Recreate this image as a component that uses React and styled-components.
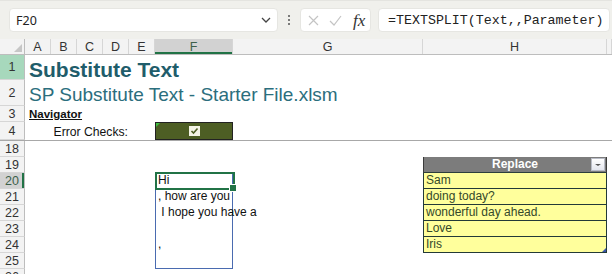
import React from 'react';
import styled, { createGlobalStyle, css } from 'styled-components';

const Global = createGlobalStyle`
  html, body { margin: 0; padding: 0; background: #fff; }
  body { width: 612px; height: 274px; overflow: hidden; font-family: "Liberation Sans", Arial, sans-serif; }
  * { box-sizing: border-box; }
`;

const COLS = '25px 26px 26px 26px 26px 26px 78px 190px 184px 1fr';

const Window = styled.div`
  width: 612px;
  height: 274px;
  overflow: hidden;
  display: flex;
  flex-direction: column;
  background: #fff;
`;

const FormulaBar = styled.div`
  height: 39px;
  flex: none;
  background: #f0f0ec;
  border-top: 1px solid #e4e4e0;
  display: flex;
  align-items: flex-start;
  padding: 7px 2px 0 9px;
`;

const NameBox = styled.div`
  width: 269px;
  height: 24px;
  background: #fff;
  border: 1px solid #e6e6e2;
  border-radius: 4px;
  display: flex;
  align-items: center;
  justify-content: space-between;
  padding: 0 6px 0 6px;
  font-family: "Noto Sans", "Open Sans", sans-serif;
  font-size: 12.5px;
  color: #222;
`;

const Dots = styled.div`
  width: 22px;
  height: 24px;
  display: flex;
  flex-direction: column;
  align-items: center;
  justify-content: center;
  gap: 2px;
  span { width: 2px; height: 2px; background: #555; border-radius: 1px; }
`;

const FxBox = styled.div`
  width: 71px;
  height: 24px;
  background: #fff;
  border: 1px solid #e6e6e2;
  border-radius: 4px;
  display: flex;
  align-items: center;
  padding: 0 0 0 7px;
  gap: 10px;
`;

const FxLabel = styled.span`
  font-family: "Liberation Serif", "Times New Roman", serif;
  font-style: italic;
  font-size: 17px;
  color: #333;
  margin-left: 1px;
  line-height: 1;
`;

const FormulaInput = styled.div`
  flex: 1;
  height: 24px;
  margin-left: 7px;
  background: #fff;
  border: 1px solid #e6e6e2;
  border-radius: 4px;
  display: flex;
  align-items: center;
  padding-left: 9px;
  font-family: "Liberation Mono", "DejaVu Sans Mono", monospace;
  font-size: 13.3px;
  color: #222;
  white-space: nowrap;
  overflow: hidden;
`;

const Row = styled.div`
  display: grid;
  grid-template-columns: ${COLS};
  height: ${p => p.$h}px;
  flex: none;
  ${p => p.$freeze && css`border-bottom: 1px solid #a8a8a8;`}
`;

const HeaderRow = styled(Row)`
  background: #f3f3f3;
  border-bottom: 1px solid #bdbdbd;
`;

const Corner = styled.div`
  position: relative;
  border-right: 1px solid #bdbdbd;
  &::after {
    content: '';
    position: absolute;
    right: 2px;
    bottom: 2px;
    border-left: 8px solid transparent;
    border-bottom: 8px solid #c6c6c6;
  }
`;

const ColHead = styled.div`
  display: flex;
  align-items: center;
  justify-content: center;
  font-size: 12.5px;
  color: #333;
  border-right: 1px solid #d6d6d6;
  ${p => p.$sel && css`
    background: #d2d2d2;
    color: #3c5f4a;
    box-shadow: inset 0 -2px 0 #217346;
  `}
`;

const RowHead = styled.div`
  display: flex;
  align-items: center;
  justify-content: center;
  font-size: 12.5px;
  color: #333;
  background: #f3f3f3;
  border-right: 1px solid #bdbdbd;
  border-bottom: 1px solid #d6d6d6;
  ${p => p.$hl && css`background: #a7d8bc;`}
  ${p => p.$sel && css`
    background: #d2d2d2;
    color: #3c5f4a;
    box-shadow: inset -2px 0 0 #217346;
  `}
`;

const Cell = styled.div`
  position: relative;
  grid-column: ${p => p.$col} / span ${p => p.$span || 1};
  display: flex;
  align-items: flex-end;
  justify-content: ${p => (p.$right ? 'flex-end' : 'flex-start')};
  padding: 0 ${p => (p.$right ? 1 : 0)}px ${p => p.$pb ?? 1}px ${p => p.$pl ?? 3}px;
  white-space: pre;
  font-size: 12px;
  line-height: 1.15;
  color: #111;
  overflow: visible;
`;

const Title = styled.span`
  font-size: 21px;
  font-weight: bold;
  line-height: 19px;
  color: #1f5d6b;
`;

const Subtitle = styled.span`
  font-size: 19px;
  line-height: 1.15;
  color: #2b6e7d;
`;

const NavLink = styled.span`
  font-size: 11.5px;
  font-weight: bold;
  text-decoration: underline;
  color: #111;
`;

const Label = styled.span`
  font-size: 12.2px;
  color: #111;
`;

const CheckCell = styled.div`
  position: relative;
  grid-column: 7;
  background: #4d5e24;
  border: 1px solid #222;
  display: flex;
  align-items: center;
  justify-content: center;
  &::before {
    content: '';
    position: absolute;
    left: 0;
    top: 0;
    border-top: 4px solid #3fbf3f;
    border-right: 4px solid transparent;
  }
`;

const SpillBorder = styled.div`
  position: absolute;
  left: 0;
  top: 0;
  width: 78px;
  height: 96px;
  border: 1px solid #4a6bb0;
  pointer-events: none;
`;

const ActiveBorder = styled.div`
  position: absolute;
  left: 0;
  top: -1px;
  right: -2px;
  bottom: -1px;
  border: 2px solid #217346;
  z-index: 2;
  &::after {
    content: '';
    position: absolute;
    right: -4px;
    bottom: -4px;
    width: 6px;
    height: 6px;
    background: #217346;
    border: 1px solid #fff;
  }
`;

const TableHead = styled.div`
  position: relative;
  grid-column: 9;
  background: #7c7c7c;
  border-left: 1px solid #3b3b3b;
  border-right: 1px solid #3b3b3b;
  border-bottom: 1px solid #2c3e3c;
  color: #fff;
  font-weight: bold;
  font-size: 12px;
  display: flex;
  align-items: flex-end;
  justify-content: center;
  padding-bottom: 1px;
`;

const FilterButton = styled.div`
  position: absolute;
  right: 1px;
  top: 1px;
  width: 14px;
  height: 13px;
  background: linear-gradient(#ffffff, #e4e6ee);
  border: 1px solid #b9bcc6;
  display: flex;
  align-items: center;
  justify-content: center;
  &::after {
    content: '';
    border-left: 3px solid transparent;
    border-right: 3px solid transparent;
    border-top: 2px solid #555;
  }
`;

const TableCell = styled.div`
  position: relative;
  grid-column: 9;
  background: #ffff9c;
  border-left: 1px solid #233a38;
  border-right: 1px solid #233a38;
  border-bottom: 1px solid #233a38;
  color: #34492a;
  font-size: 12px;
  line-height: 1.15;
  display: flex;
  align-items: flex-end;
  padding: 0 0 0 2px;
  white-space: nowrap;
  ${p => p.$last && css`
    &::after {
      content: '';
      position: absolute;
      right: 0;
      bottom: 0;
      border-left: 4px solid transparent;
      border-bottom: 4px solid #3a56a8;
    }
  `}
`;

const ChevronIcon = () => (
  <svg width="10" height="6" viewBox="0 0 10 6">
    <path d="M1 1 L5 5 L9 1" fill="none" stroke="#444" strokeWidth="1.3" />
  </svg>
);

const CancelIcon = () => (
  <svg width="11" height="11" viewBox="0 0 11 11">
    <path d="M1 1 L10 10 M10 1 L1 10" stroke="#c4c4c4" strokeWidth="1.2" />
  </svg>
);

const EnterIcon = () => (
  <svg width="13" height="11" viewBox="0 0 13 11">
    <path d="M1 6 L5 10 L12 1" fill="none" stroke="#c4c4c4" strokeWidth="1.2" />
  </svg>
);

const CheckboxIcon = () => (
  <svg width="11" height="10" viewBox="0 0 11 10">
    <rect x="0.5" y="0.5" width="10" height="9" fill="#f4f4e6" stroke="#f4f4e6" />
    <path d="M2.5 5 L4.5 7 L8.5 2.5" fill="none" stroke="#4d5e24" strokeWidth="1.6" />
  </svg>
);

const columns = ['A', 'B', 'C', 'D', 'E', 'F', 'G', 'H', ''];

const replaceItems = ['Sam', 'doing today?', 'wonderful day ahead.', 'Love', 'Iris'];
const spillItems = ['Hi', ', how are you', ' I hope you have a', '', ',', ''];

export default function App() {
  return (
    <>
      <Global />
      <Window>
        <FormulaBar>
          <NameBox>
            <span>F20</span>
            <ChevronIcon />
          </NameBox>
          <Dots><span /><span /><span /></Dots>
          <FxBox>
            <CancelIcon />
            <EnterIcon />
            <FxLabel>fx</FxLabel>
          </FxBox>
          <FormulaInput>=TEXTSPLIT(Text,,Parameter)</FormulaInput>
        </FormulaBar>

        <HeaderRow $h={16}>
          <Corner />
          {columns.map((c, i) => (
            <ColHead key={i} $sel={c === 'F'}>{c}</ColHead>
          ))}
        </HeaderRow>

        <Row $h={25}>
          <RowHead $hl>1</RowHead>
          <Cell $col={2} $span={8} $pl={4}><Title>Substitute Text</Title></Cell>
        </Row>
        <Row $h={26}>
          <RowHead>2</RowHead>
          <Cell $col={2} $span={8} $pl={4} $pb={0}><Subtitle>SP Substitute Text - Starter File.xlsm</Subtitle></Cell>
        </Row>
        <Row $h={16}>
          <RowHead>3</RowHead>
          <Cell $col={2} $span={4} $pl={4}><NavLink>Navigator</NavLink></Cell>
        </Row>
        <Row $h={19} $freeze>
          <RowHead>4</RowHead>
          <Cell $col={2} $span={4} $right><Label>Error Checks:</Label></Cell>
          <CheckCell><CheckboxIcon /></CheckCell>
        </Row>
        <Row $h={16}>
          <RowHead>18</RowHead>
        </Row>
        <Row $h={16}>
          <RowHead>19</RowHead>
          <TableHead>Replace<FilterButton /></TableHead>
        </Row>
        {spillItems.map((text, i) => {
          const n = 20 + i;
          return (
            <Row key={n} $h={16}>
              <RowHead $sel={n === 20}>{n}</RowHead>
              <Cell $col={7}>
                {i === 0 && <SpillBorder />}
                {i === 0 && <ActiveBorder />}
                {text}
              </Cell>
              {i < replaceItems.length && (
                <TableCell $last={i === replaceItems.length - 1}>{replaceItems[i]}</TableCell>
              )}
            </Row>
          );
        })}
        <Row $h={16}>
          <RowHead>26</RowHead>
        </Row>
      </Window>
    </>
  );
}
